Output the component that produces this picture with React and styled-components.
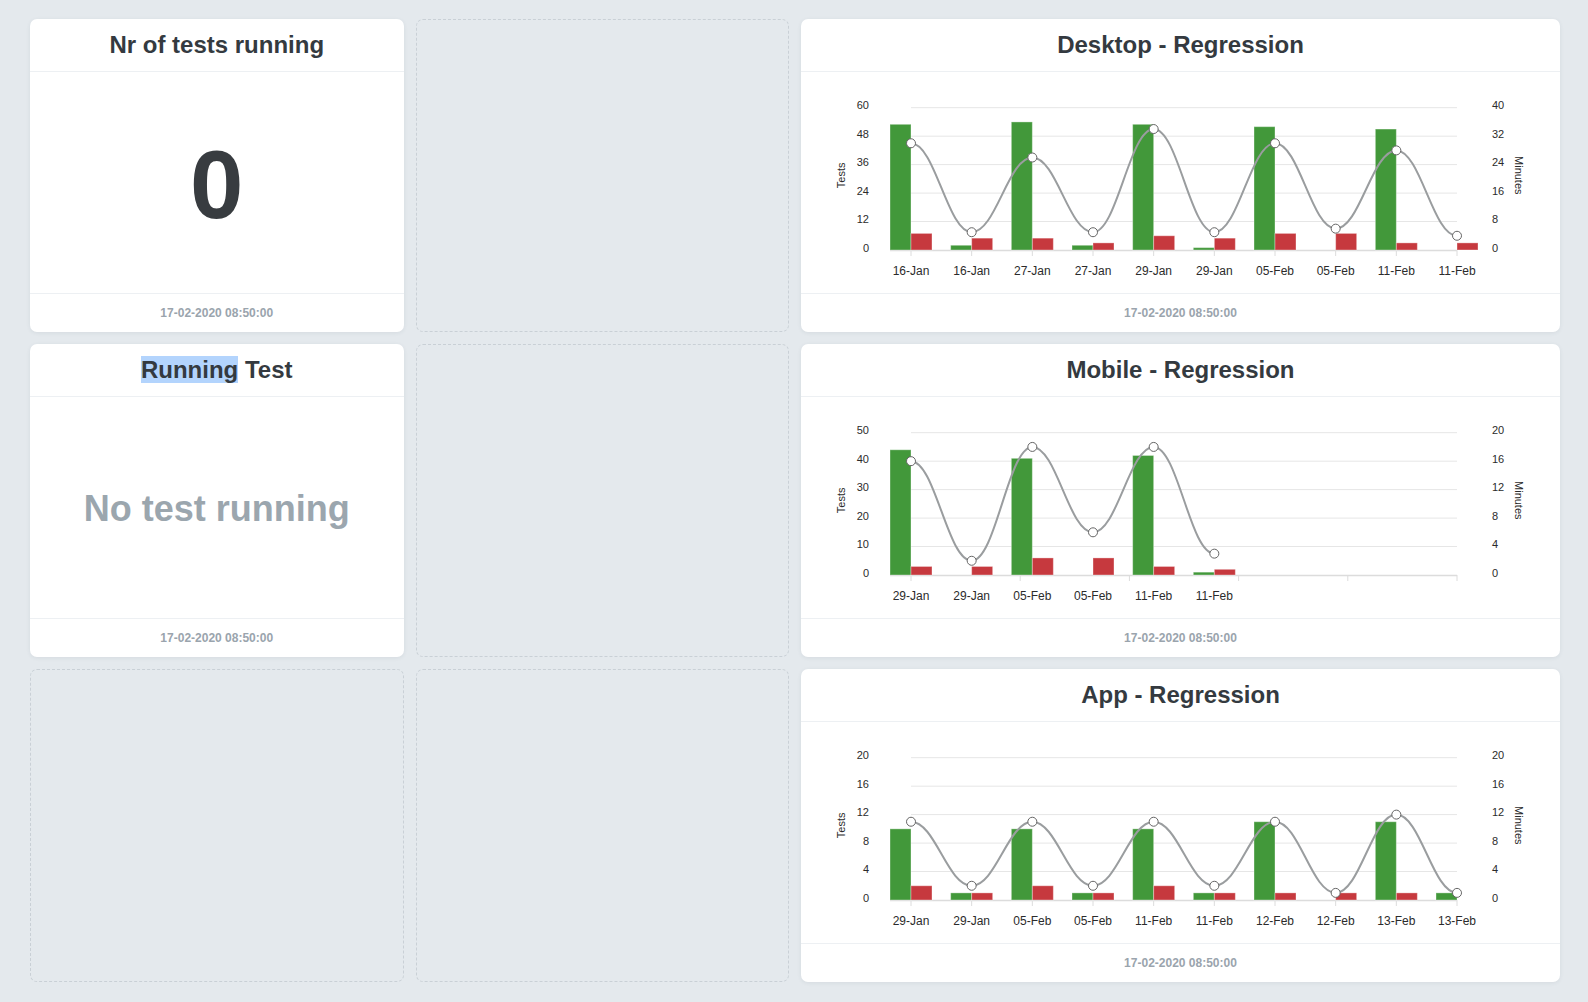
import React from "react";
import styled, { createGlobalStyle } from "styled-components";

const GlobalStyle = createGlobalStyle`
  html, body {
    margin: 0;
    padding: 0;
    background: #e4e9ed;
  }
  body {
    font-family: "Liberation Sans", Arial, sans-serif;
  }
`;

const Dashboard = styled.div`
  display: grid;
  grid-template-columns: repeat(4, 1fr);
  grid-template-rows: repeat(3, 313px);
  gap: 12px;
  width: 1588px;
  height: 1002px;
  padding: 19px 28px 20px 30px;
  box-sizing: border-box;
`;

const Card = styled.section`
  grid-column: span ${(p) => p.$span || 1};
  display: flex;
  flex-direction: column;
  background: #fff;
  border-radius: 7px;
  box-shadow: 0 1px 4px rgba(40, 60, 80, 0.08);
  overflow: hidden;
`;

const Placeholder = styled.div`
  border: 1px dashed #c9d0d6;
  border-radius: 7px;
  box-sizing: border-box;
`;

const CardHeader = styled.header`
  height: 52px;
  display: flex;
  align-items: center;
  justify-content: center;
  border-bottom: 1px solid #edf0f3;
`;

const Title = styled.h2`
  margin: 0;
  font-size: 24px;
  font-weight: 700;
  color: #343a40;
`;

const Highlight = styled.span`
  background: #b3d4fd;
`;

const CardBody = styled.div`
  flex: 1;
  min-height: 0;
  display: flex;
  align-items: center;
  justify-content: center;
`;

const CardFooter = styled.footer`
  height: 38px;
  display: flex;
  align-items: center;
  justify-content: center;
  border-top: 1px solid #edf0f3;
  font-size: 12px;
  font-weight: 700;
  color: #9aa4ad;
`;

const Counter = styled.div`
  margin-top: 4px;
  font-size: 96px;
  font-weight: 700;
  line-height: 1;
  color: #383c40;
`;

const Empty = styled.div`
  margin-top: 3px;
  font-size: 36px;
  font-weight: 700;
  color: #9ba6ae;
`;

const CHART_W = 759;
const CHART_H = 222;
const X0 = 110;
const X1 = 656;
const TOP = 35.7;
const BOTTOM = 178;
const BAR = 21;

function spline(points) {
  let d = `M${points[0][0]} ${points[0][1]}`;
  for (let i = 1; i < points.length; i++) {
    const [px, py] = points[i - 1];
    const [x, y] = points[i];
    const k = (x - px) * 0.4;
    d += ` C${px + k} ${py} ${x - k} ${y} ${x} ${y}`;
  }
  return d;
}

function Chart({ data }) {
  const step = (X1 - X0) / 9;
  const cx = (i) => X0 + i * step;
  const yL = (v) => BOTTOM - (v / data.leftMax) * (BOTTOM - TOP);
  const yR = (v) => BOTTOM - (v / data.rightMax) * (BOTTOM - TOP);
  const levels = [0, 1, 2, 3, 4, 5];
  const ticks =
    data.ticks === "even"
      ? levels.map((i) => X0 + (i * (X1 - X0)) / 5)
      : data.categories.map((_, i) => cx(i));
  const points = data.minutes.map((m, i) => [cx(i), yR(m)]);

  return (
    <svg width={CHART_W} height={CHART_H} viewBox={`0 0 ${CHART_W} ${CHART_H}`}>
      <g fontFamily='"Liberation Sans", Arial, sans-serif' fill="#2b2b2b">
        {levels.map((l) => {
          const y = TOP + ((5 - l) * (BOTTOM - TOP)) / 5;
          return (
            <g key={l}>
              {l > 0 && <line x1={X0} x2={X1} y1={y} y2={y} stroke="#e6e6e6" strokeWidth="1" />}
              <text x="68" y={y + 1.5} fontSize="11" textAnchor="end">
                {(data.leftMax / 5) * l}
              </text>
              <text x="691" y={y + 1.5} fontSize="11">
                {(data.rightMax / 5) * l}
              </text>
            </g>
          );
        })}
        <line x1={X0 - BAR} x2={X1} y1={BOTTOM + 0.5} y2={BOTTOM + 0.5} stroke="#dcdcdc" strokeWidth="1.5" />
        {ticks.map((x, i) => (
          <line key={i} x1={x} x2={x} y1={BOTTOM} y2={BOTTOM + 6} stroke="#dcdcdc" strokeWidth="1" />
        ))}
        {data.passed.map((v, i) =>
          v > 0 ? (
            <rect key={`p${i}`} x={cx(i) - BAR} y={yL(v)} width={BAR} height={BOTTOM - yL(v)}
              fill="#42983a" stroke="rgba(255,255,255,0.35)" strokeWidth="1" />
          ) : null
        )}
        {data.failed.map((v, i) =>
          v > 0 ? (
            <rect key={`f${i}`} x={cx(i)} y={yL(v)} width={BAR} height={BOTTOM - yL(v)}
              fill="#c6393e" stroke="rgba(255,255,255,0.35)" strokeWidth="1" />
          ) : null
        )}
        <path d={spline(points)} fill="none" stroke="#9a9d9f" strokeWidth="2" />
        {points.map(([x, y], i) => (
          <circle key={i} cx={x} cy={y} r="4.5" fill="#fff" stroke="#666" strokeWidth="1" />
        ))}
        {data.categories.map((c, i) => (
          <text key={i} x={cx(i)} y="202.6" fontSize="12" textAnchor="middle">
            {c}
          </text>
        ))}
        <text x="40" y="103.3" fontSize="11" textAnchor="middle" dominantBaseline="central"
          transform="rotate(-90 40 103.3)">
          Tests
        </text>
        <text x="718.3" y="103.3" fontSize="11" textAnchor="middle" dominantBaseline="central"
          transform="rotate(90 718.3 103.3)">
          Minutes
        </text>
      </g>
    </svg>
  );
}

const charts = {
  desktop: {
    title: "Desktop - Regression",
    leftMax: 60,
    rightMax: 40,
    categories: ["16-Jan", "16-Jan", "27-Jan", "27-Jan", "29-Jan", "29-Jan", "05-Feb", "05-Feb", "11-Feb", "11-Feb"],
    passed: [53, 2, 54, 2, 53, 1, 52, 0, 51, 0],
    failed: [7, 5, 5, 3, 6, 5, 7, 7, 3, 3],
    minutes: [30, 5, 26, 5, 34, 5, 30, 6, 28, 4],
  },
  mobile: {
    title: "Mobile - Regression",
    leftMax: 50,
    rightMax: 20,
    ticks: "even",
    categories: ["29-Jan", "29-Jan", "05-Feb", "05-Feb", "11-Feb", "11-Feb"],
    passed: [44, 0, 41, 0, 42, 1],
    failed: [3, 3, 6, 6, 3, 2],
    minutes: [16, 2, 18, 6, 18, 3],
  },
  app: {
    title: "App - Regression",
    leftMax: 20,
    rightMax: 20,
    categories: ["29-Jan", "29-Jan", "05-Feb", "05-Feb", "11-Feb", "11-Feb", "12-Feb", "12-Feb", "13-Feb", "13-Feb"],
    passed: [10, 1, 10, 1, 10, 1, 11, 0, 11, 1],
    failed: [2, 1, 2, 1, 2, 1, 1, 1, 1, 0],
    minutes: [11, 2, 11, 2, 11, 2, 11, 1, 12, 1],
  },
};

const STAMP = "17-02-2020 08:50:00";

function ChartCard({ data }) {
  return (
    <Card $span={2}>
      <CardHeader>
        <Title>{data.title}</Title>
      </CardHeader>
      <CardBody>
        <Chart data={data} />
      </CardBody>
      <CardFooter>{STAMP}</CardFooter>
    </Card>
  );
}

export default function App() {
  return (
    <>
      <GlobalStyle />
      <Dashboard>
        <Card>
          <CardHeader>
            <Title>Nr of tests running</Title>
          </CardHeader>
          <CardBody>
            <Counter>0</Counter>
          </CardBody>
          <CardFooter>{STAMP}</CardFooter>
        </Card>
        <Placeholder />
        <ChartCard data={charts.desktop} />

        <Card>
          <CardHeader>
            <Title>
              <Highlight>Running</Highlight> Test
            </Title>
          </CardHeader>
          <CardBody>
            <Empty>No test running</Empty>
          </CardBody>
          <CardFooter>{STAMP}</CardFooter>
        </Card>
        <Placeholder />
        <ChartCard data={charts.mobile} />

        <Placeholder />
        <Placeholder />
        <ChartCard data={charts.app} />
      </Dashboard>
    </>
  );
}
